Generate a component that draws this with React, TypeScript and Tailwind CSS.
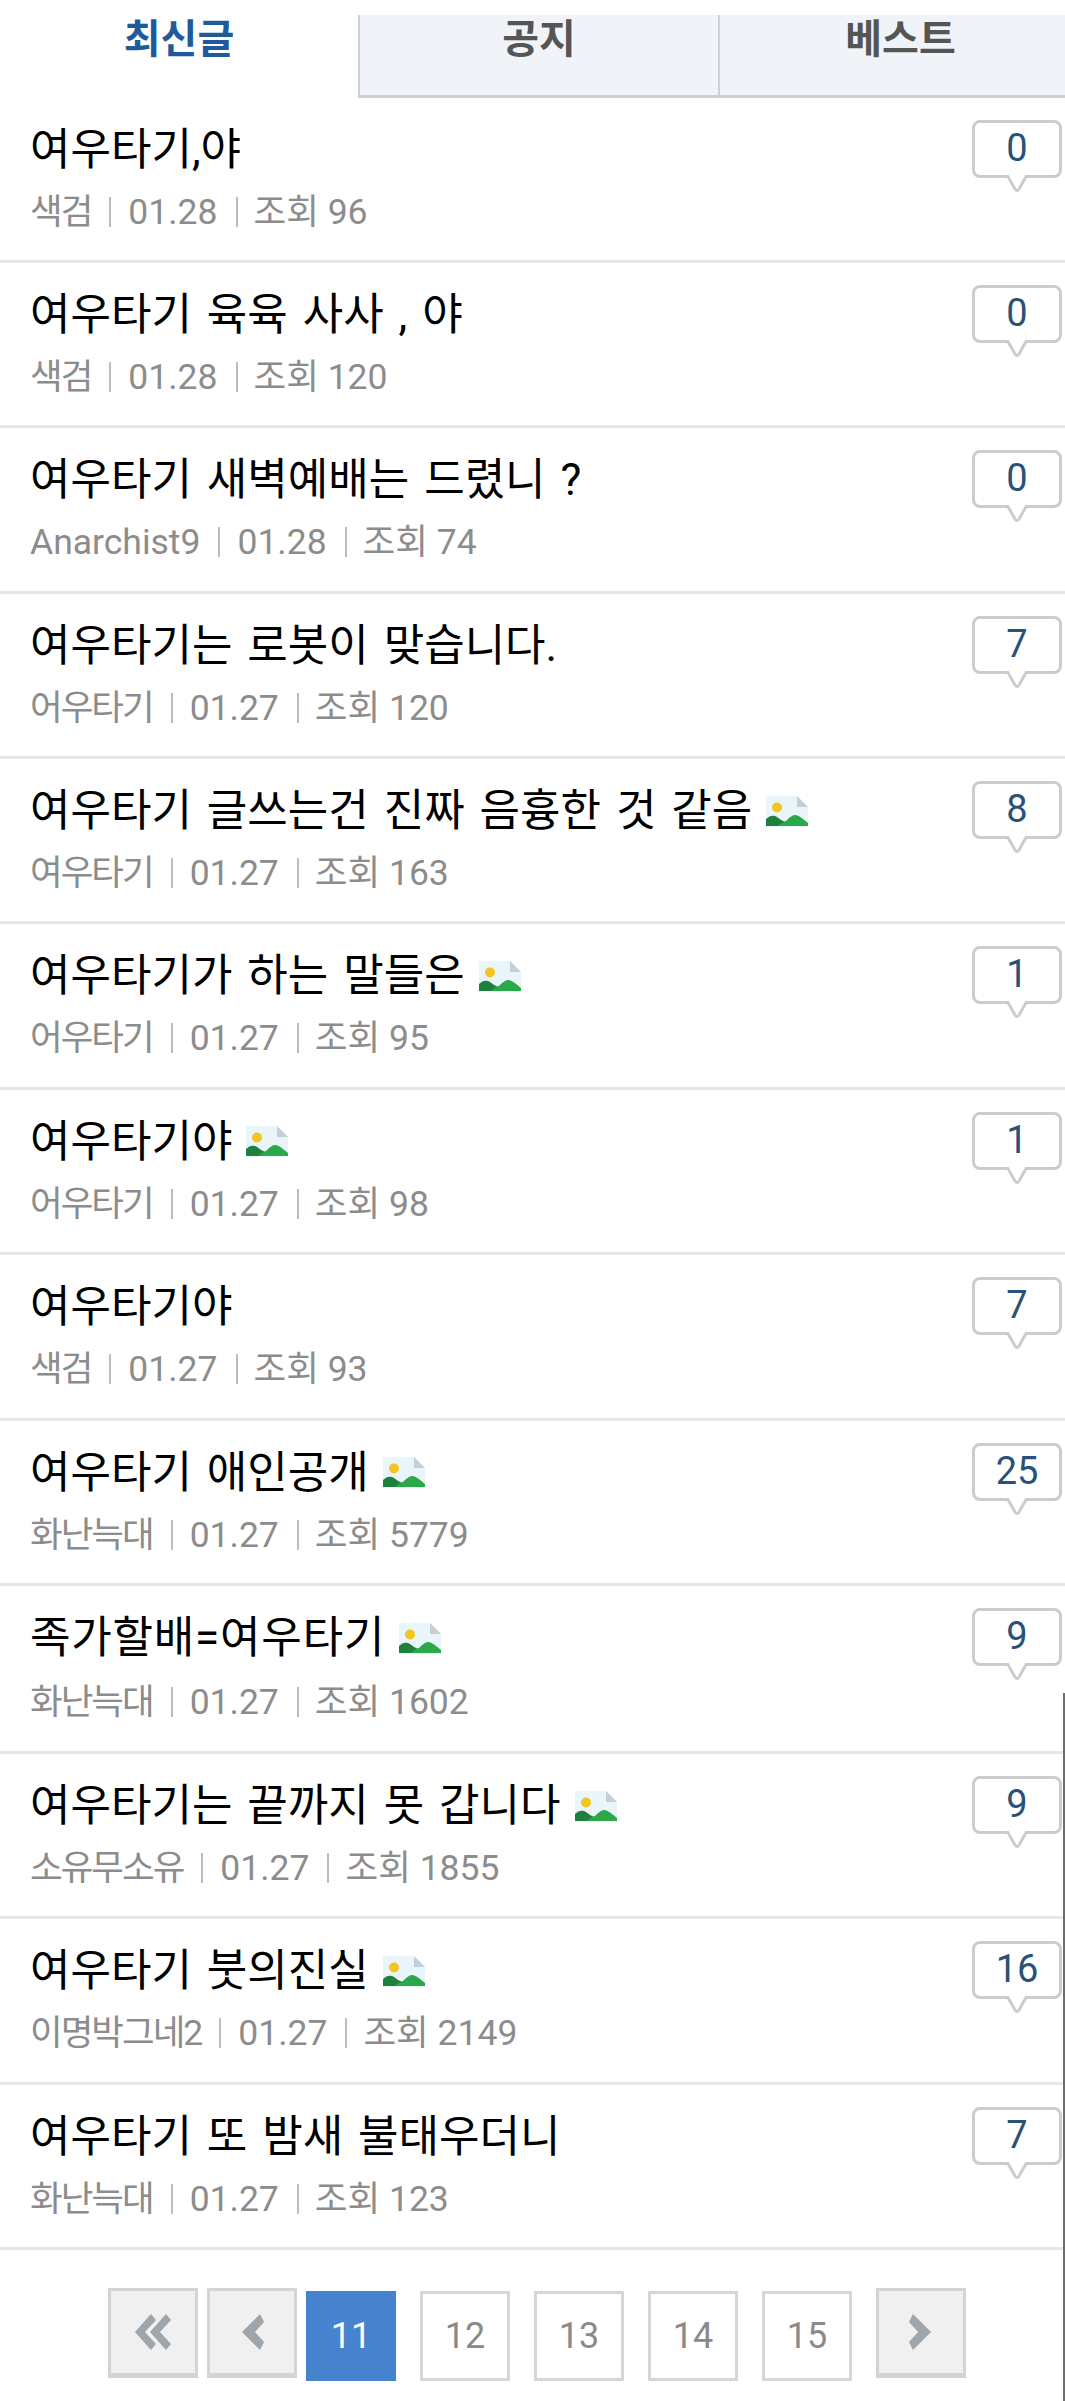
import React from 'react';

type Post = {
  title: string;
  author: string;
  date: string;
  views: number;
  comments: number;
  hasImage?: boolean;
  tall?: boolean;
};

const posts: Post[] = [
  { title: '여우타기,야', author: '색검', date: '01.28', views: 96, comments: 0 },
  { title: '여우타기 육육 사사 , 야', author: '색검', date: '01.28', views: 120, comments: 0 },
  { title: '여우타기 새벽예배는 드렸니 ?', author: 'Anarchist9', date: '01.28', views: 74, comments: 0 },
  { title: '여우타기는 로봇이 맞습니다.', author: '어우타기', date: '01.27', views: 120, comments: 7 },
  { title: '여우타기 글쓰는건 진짜 음흉한 것 같음', author: '여우타기', date: '01.27', views: 163, comments: 8, hasImage: true },
  { title: '여우타기가 하는 말들은', author: '어우타기', date: '01.27', views: 95, comments: 1, hasImage: true },
  { title: '여우타기야', author: '어우타기', date: '01.27', views: 98, comments: 1, hasImage: true },
  { title: '여우타기야', author: '색검', date: '01.27', views: 93, comments: 7 },
  { title: '여우타기 애인공개', author: '화난늑대', date: '01.27', views: 5779, comments: 25, hasImage: true },
  { title: '족가할배=여우타기', author: '화난늑대', date: '01.27', views: 1602, comments: 9, hasImage: true, tall: true },
  { title: '여우타기는 끝까지 못 갑니다', author: '소유무소유', date: '01.27', views: 1855, comments: 9, hasImage: true },
  { title: '여우타기 붓의진실', author: '이명박그네2', date: '01.27', views: 2149, comments: 16, hasImage: true },
  { title: '여우타기 또 밤새 불태우더니', author: '화난늑대', date: '01.27', views: 123, comments: 7 },
];

const ImageIcon = () => (
  <svg width="42" height="31" viewBox="0 0 42 31" className="shrink-0">
    <path d="M0 0H31L42 11V31H0Z" fill="#eaf5fa" />
    <path d="M31 0L42 11H31Z" fill="#c3cfd8" />
    <circle cx="11" cy="11.5" r="5" fill="#f2c522" />
    <path d="M0 30V23C3 20 6 19 9 20C12 21 15 25 20 26L24 30Z" fill="#1f7f3c" />
    <path d="M12 30C15 27 18 26 20 25C23 22 26 19 29 19C33 19 37 23 42 27V30Z" fill="#2ba84a" />
  </svg>
);

const CommentBubble = ({ count }: { count: number }) => (
  <div className="relative mt-[22px] mr-[3px] flex h-[58px] w-[90px] shrink-0 items-center justify-center rounded-[8px] border-[3px] border-[#cccccc] bg-white pb-[2px] text-[38px] leading-none text-[#2a5278]">
    {count}
    <svg width="22" height="17" viewBox="0 0 22 17" className="absolute bottom-[-17px] left-[31px]">
      <path d="M1 0L9 14Q11 17 13 14L21 0" fill="white" stroke="#cccccc" strokeWidth="3" />
    </svg>
  </div>
);

const PostRow = ({ post }: { post: Post }) => {
  const isLatinName = /^[A-Za-z]/.test(post.author);
  return (
    <li className={`flex justify-between border-b-[3px] border-[#e6e6e6] pl-[30px] ${post.tall ? 'h-[168px]' : 'h-[165.4px]'}`}>
      <div className="pt-[21px]">
        <div className={`flex h-[62px] items-center gap-[14px] text-[44px] leading-none [word-spacing:4px] text-black ${post.tall ? 'tracking-[0.8px]' : ''}`}>
          <span>{post.title}</span>
          {post.hasImage && <ImageIcon />}
        </div>
        <div className={`flex items-center text-[35.5px] leading-[44px] text-[#8c8c8c] ${post.tall ? 'mt-[11px]' : 'mt-[9px]'}`}>
          <span className={isLatinName ? '' : 'tracking-[-2px]'}>{post.author}</span>
          <span className="mr-[17px] ml-[18px] h-[30px] w-[2px] bg-[#bdbdbd]" />
          <span>{post.date}</span>
          <span className="mr-[16px] ml-[18px] h-[30px] w-[2px] bg-[#bdbdbd]" />
          <span>조회 {post.views}</span>
        </div>
      </div>
      <CommentBubble count={post.comments} />
    </li>
  );
};

const ArrowButton = ({ points }: { points: string[] }) => (
  <button className="mb-[3px] flex h-[90px] w-[90px] items-center justify-center border-[3px] border-b-[5px] border-[#d4d4d4] bg-[#f0f0f0]">
    <svg width="40" height="36" viewBox="0 0 40 36">
      {points.map((p) => (
        <polygon key={p} points={p} fill="#9ea5ab" />
      ))}
    </svg>
  </button>
);

export default function App() {
  return (
    <div
      className="relative h-[2401px] overflow-hidden bg-white pt-[15px]"
      style={{ fontFamily: 'Roboto, "Noto Sans CJK KR", sans-serif' }}
    >
      <div className="flex h-[83px] text-[40px] font-bold">
        <div className="flex w-[358px] justify-center bg-white leading-[50px] text-[#1f5a9c]">최신글</div>
        <div className="flex w-[360px] justify-center border-b-[3px] border-l-[2px] border-[#cdd1d5] bg-[#f0f4f8] leading-[50px] text-[#555555]">
          공지
        </div>
        <div className="flex flex-1 justify-center border-b-[3px] border-l-[2px] border-[#cdd1d5] bg-[#f0f4f8] pl-[16px] leading-[50px] text-[#555555]">
          베스트
        </div>
      </div>

      <ul className="mt-[-0.5px]">
        {posts.map((post, i) => (
          <PostRow key={i} post={post} />
        ))}
      </ul>

      <nav className="mt-[38px] flex items-start pl-[108px] text-[36px] text-[#8a8a8a]">
        <ArrowButton points={['18,0 2,18 18,36 23,30 12,18 23,6', '33,0 17,18 33,36 38,30 27,18 38,6']} />
        <div className="ml-[9px]">
          <ArrowButton points={['28,0 10,18 28,36 32,28 23,18 32,8']} />
        </div>
        <span className="mt-[3px] ml-[9px] flex h-[90px] w-[90px] items-center justify-center bg-[#4682ce] text-white">11</span>
        {[12, 13, 14, 15].map((n) => (
          <span key={n} className="mt-[3px] ml-[24px] flex h-[90px] w-[90px] items-center justify-center border-[3px] border-[#d6d6d6]">
            {n}
          </span>
        ))}
        <div className="ml-[24px]">
          <ArrowButton points={['12,0 30,18 12,36 8,28 17,18 8,8']} />
        </div>
      </nav>

      {/* scrollbar thumb showing at the edge */}
      <div className="absolute top-[1693px] right-0 bottom-0 w-[2px] bg-[#6e6e6e]" />
    </div>
  );
}
